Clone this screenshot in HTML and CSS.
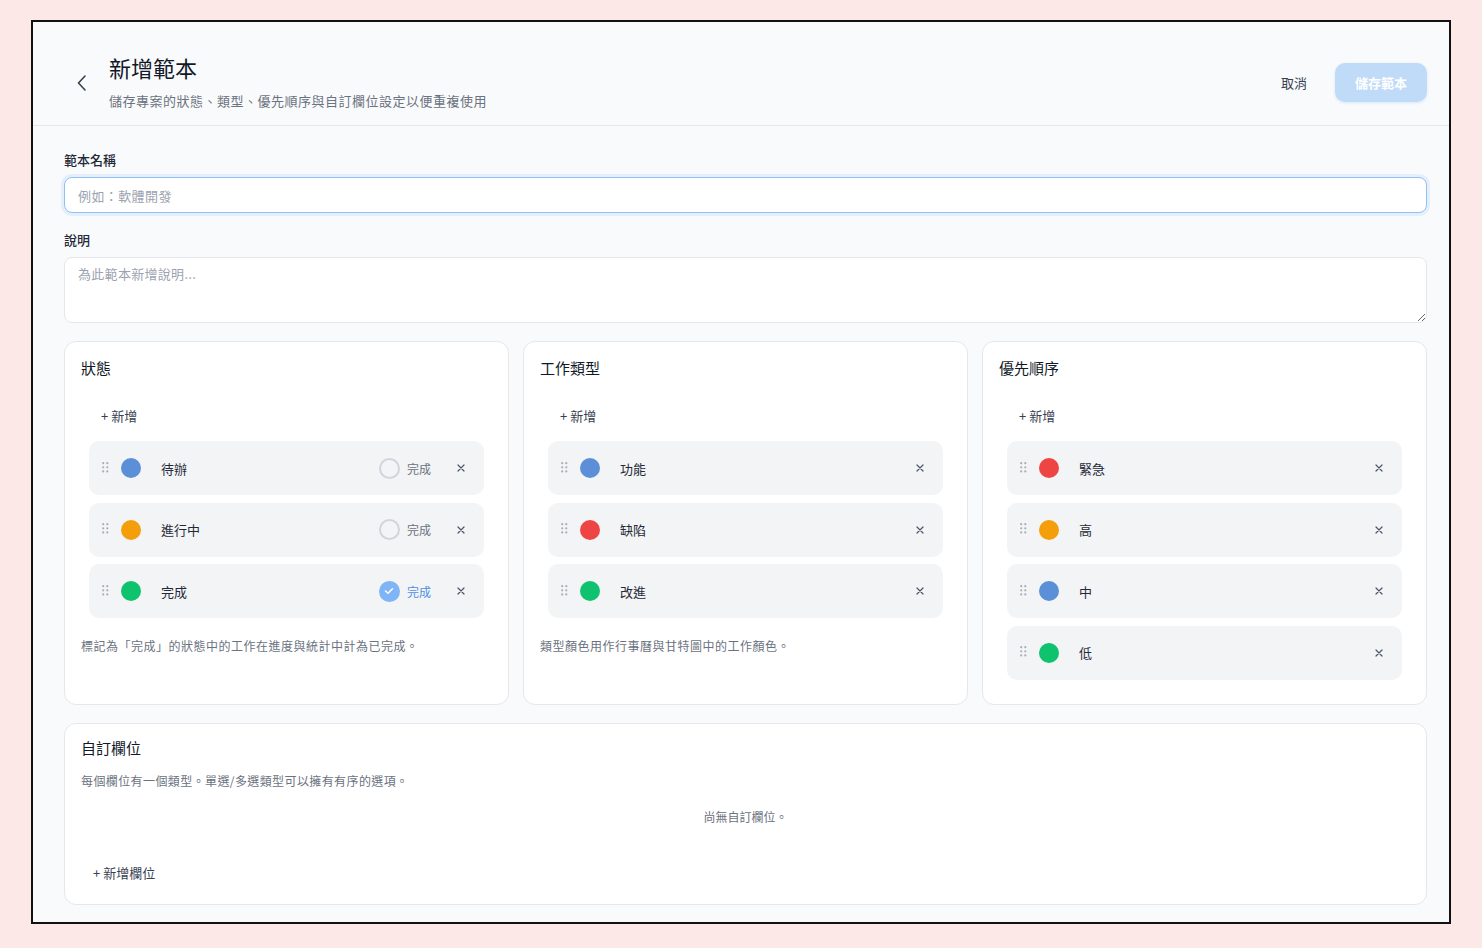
FILE: index.html
```html
<!DOCTYPE html>
<html lang="zh-Hant">
<head>
<meta charset="utf-8">
<title>新增範本</title>
<link rel="stylesheet" href="styles.css">
</head>
<body>
<div class="frame">
  <header class="header">
    <button class="back" aria-label="返回">
      <svg width="12" height="18" viewBox="0 0 12 18"><path d="M9 2 L2.5 9 L9 16" fill="none" stroke="#374151" stroke-width="1.6" stroke-linecap="round" stroke-linejoin="round"/></svg>
    </button>
    <div class="head-text">
      <h1 class="title">新增範本</h1>
      <p class="subtitle">儲存專案的狀態、類型、優先順序與自訂欄位設定以便重複使用</p>
    </div>
    <div class="head-actions">
      <button class="btn-cancel">取消</button>
      <button class="btn-save">儲存範本</button>
    </div>
  </header>

  <main class="main">
    <label class="label">範本名稱</label>
    <input class="input focused" type="text" placeholder="例如：軟體開發" autofocus>
    <label class="label label-gap">說明</label>
    <textarea class="textarea" placeholder="為此範本新增說明..."></textarea>

    <section class="cards">
      <div class="card">
        <h2 class="card-title">狀態</h2>
        <div class="list">
          <button class="add">+ 新增</button>
          <div class="row">
            <span class="handle"><svg width="7" height="11" viewBox="0 0 7 11"><g fill="#a8adb6"><circle cx="1.2" cy="1.2" r="1.1"/><circle cx="5.3" cy="1.2" r="1.1"/><circle cx="1.2" cy="5.3" r="1.1"/><circle cx="5.3" cy="5.3" r="1.1"/><circle cx="1.2" cy="9.4" r="1.1"/><circle cx="5.3" cy="9.4" r="1.1"/></g></svg></span>
            <span class="dot blue"></span>
            <span class="name">待辦</span>
            <span class="done"><span class="radio"></span><span class="done-text">完成</span></span>
            <span class="x"><svg width="8" height="8" viewBox="0 0 8 8"><path d="M1 1 L7 7 M7 1 L1 7" stroke="#4b5563" stroke-width="1.2" stroke-linecap="round"/></svg></span>
          </div>
          <div class="row">
            <span class="handle"><svg width="7" height="11" viewBox="0 0 7 11"><g fill="#a8adb6"><circle cx="1.2" cy="1.2" r="1.1"/><circle cx="5.3" cy="1.2" r="1.1"/><circle cx="1.2" cy="5.3" r="1.1"/><circle cx="5.3" cy="5.3" r="1.1"/><circle cx="1.2" cy="9.4" r="1.1"/><circle cx="5.3" cy="9.4" r="1.1"/></g></svg></span>
            <span class="dot orange"></span>
            <span class="name">進行中</span>
            <span class="done"><span class="radio"></span><span class="done-text">完成</span></span>
            <span class="x"><svg width="8" height="8" viewBox="0 0 8 8"><path d="M1 1 L7 7 M7 1 L1 7" stroke="#4b5563" stroke-width="1.2" stroke-linecap="round"/></svg></span>
          </div>
          <div class="row">
            <span class="handle"><svg width="7" height="11" viewBox="0 0 7 11"><g fill="#a8adb6"><circle cx="1.2" cy="1.2" r="1.1"/><circle cx="5.3" cy="1.2" r="1.1"/><circle cx="1.2" cy="5.3" r="1.1"/><circle cx="5.3" cy="5.3" r="1.1"/><circle cx="1.2" cy="9.4" r="1.1"/><circle cx="5.3" cy="9.4" r="1.1"/></g></svg></span>
            <span class="dot green"></span>
            <span class="name">完成</span>
            <span class="done on"><span class="radio checked"><svg width="10" height="8" viewBox="0 0 10 8"><path d="M1.5 4 L4 6.3 L8.5 1.7" fill="none" stroke="#fff" stroke-width="1.5" stroke-linecap="round" stroke-linejoin="round"/></svg></span><span class="done-text">完成</span></span>
            <span class="x"><svg width="8" height="8" viewBox="0 0 8 8"><path d="M1 1 L7 7 M7 1 L1 7" stroke="#4b5563" stroke-width="1.2" stroke-linecap="round"/></svg></span>
          </div>
        </div>
        <p class="help">標記為「完成」的狀態中的工作在進度與統計中計為已完成。</p>
      </div>

      <div class="card">
        <h2 class="card-title">工作類型</h2>
        <div class="list">
          <button class="add">+ 新增</button>
          <div class="row">
            <span class="handle"><svg width="7" height="11" viewBox="0 0 7 11"><g fill="#a8adb6"><circle cx="1.2" cy="1.2" r="1.1"/><circle cx="5.3" cy="1.2" r="1.1"/><circle cx="1.2" cy="5.3" r="1.1"/><circle cx="5.3" cy="5.3" r="1.1"/><circle cx="1.2" cy="9.4" r="1.1"/><circle cx="5.3" cy="9.4" r="1.1"/></g></svg></span>
            <span class="dot blue"></span>
            <span class="name">功能</span>
            <span class="x"><svg width="8" height="8" viewBox="0 0 8 8"><path d="M1 1 L7 7 M7 1 L1 7" stroke="#4b5563" stroke-width="1.2" stroke-linecap="round"/></svg></span>
          </div>
          <div class="row">
            <span class="handle"><svg width="7" height="11" viewBox="0 0 7 11"><g fill="#a8adb6"><circle cx="1.2" cy="1.2" r="1.1"/><circle cx="5.3" cy="1.2" r="1.1"/><circle cx="1.2" cy="5.3" r="1.1"/><circle cx="5.3" cy="5.3" r="1.1"/><circle cx="1.2" cy="9.4" r="1.1"/><circle cx="5.3" cy="9.4" r="1.1"/></g></svg></span>
            <span class="dot red"></span>
            <span class="name">缺陷</span>
            <span class="x"><svg width="8" height="8" viewBox="0 0 8 8"><path d="M1 1 L7 7 M7 1 L1 7" stroke="#4b5563" stroke-width="1.2" stroke-linecap="round"/></svg></span>
          </div>
          <div class="row">
            <span class="handle"><svg width="7" height="11" viewBox="0 0 7 11"><g fill="#a8adb6"><circle cx="1.2" cy="1.2" r="1.1"/><circle cx="5.3" cy="1.2" r="1.1"/><circle cx="1.2" cy="5.3" r="1.1"/><circle cx="5.3" cy="5.3" r="1.1"/><circle cx="1.2" cy="9.4" r="1.1"/><circle cx="5.3" cy="9.4" r="1.1"/></g></svg></span>
            <span class="dot green"></span>
            <span class="name">改進</span>
            <span class="x"><svg width="8" height="8" viewBox="0 0 8 8"><path d="M1 1 L7 7 M7 1 L1 7" stroke="#4b5563" stroke-width="1.2" stroke-linecap="round"/></svg></span>
          </div>
        </div>
        <p class="help">類型顏色用作行事曆與甘特圖中的工作顏色。</p>
      </div>

      <div class="card">
        <h2 class="card-title">優先順序</h2>
        <div class="list">
          <button class="add">+ 新增</button>
          <div class="row">
            <span class="handle"><svg width="7" height="11" viewBox="0 0 7 11"><g fill="#a8adb6"><circle cx="1.2" cy="1.2" r="1.1"/><circle cx="5.3" cy="1.2" r="1.1"/><circle cx="1.2" cy="5.3" r="1.1"/><circle cx="5.3" cy="5.3" r="1.1"/><circle cx="1.2" cy="9.4" r="1.1"/><circle cx="5.3" cy="9.4" r="1.1"/></g></svg></span>
            <span class="dot red"></span>
            <span class="name">緊急</span>
            <span class="x"><svg width="8" height="8" viewBox="0 0 8 8"><path d="M1 1 L7 7 M7 1 L1 7" stroke="#4b5563" stroke-width="1.2" stroke-linecap="round"/></svg></span>
          </div>
          <div class="row">
            <span class="handle"><svg width="7" height="11" viewBox="0 0 7 11"><g fill="#a8adb6"><circle cx="1.2" cy="1.2" r="1.1"/><circle cx="5.3" cy="1.2" r="1.1"/><circle cx="1.2" cy="5.3" r="1.1"/><circle cx="5.3" cy="5.3" r="1.1"/><circle cx="1.2" cy="9.4" r="1.1"/><circle cx="5.3" cy="9.4" r="1.1"/></g></svg></span>
            <span class="dot orange"></span>
            <span class="name">高</span>
            <span class="x"><svg width="8" height="8" viewBox="0 0 8 8"><path d="M1 1 L7 7 M7 1 L1 7" stroke="#4b5563" stroke-width="1.2" stroke-linecap="round"/></svg></span>
          </div>
          <div class="row">
            <span class="handle"><svg width="7" height="11" viewBox="0 0 7 11"><g fill="#a8adb6"><circle cx="1.2" cy="1.2" r="1.1"/><circle cx="5.3" cy="1.2" r="1.1"/><circle cx="1.2" cy="5.3" r="1.1"/><circle cx="5.3" cy="5.3" r="1.1"/><circle cx="1.2" cy="9.4" r="1.1"/><circle cx="5.3" cy="9.4" r="1.1"/></g></svg></span>
            <span class="dot blue"></span>
            <span class="name">中</span>
            <span class="x"><svg width="8" height="8" viewBox="0 0 8 8"><path d="M1 1 L7 7 M7 1 L1 7" stroke="#4b5563" stroke-width="1.2" stroke-linecap="round"/></svg></span>
          </div>
          <div class="row">
            <span class="handle"><svg width="7" height="11" viewBox="0 0 7 11"><g fill="#a8adb6"><circle cx="1.2" cy="1.2" r="1.1"/><circle cx="5.3" cy="1.2" r="1.1"/><circle cx="1.2" cy="5.3" r="1.1"/><circle cx="5.3" cy="5.3" r="1.1"/><circle cx="1.2" cy="9.4" r="1.1"/><circle cx="5.3" cy="9.4" r="1.1"/></g></svg></span>
            <span class="dot green"></span>
            <span class="name">低</span>
            <span class="x"><svg width="8" height="8" viewBox="0 0 8 8"><path d="M1 1 L7 7 M7 1 L1 7" stroke="#4b5563" stroke-width="1.2" stroke-linecap="round"/></svg></span>
          </div>
        </div>
      </div>
    </section>

    <section class="card custom">
      <h2 class="card-title">自訂欄位</h2>
      <p class="custom-desc">每個欄位有一個類型。單選/多選類型可以擁有有序的選項。</p>
      <p class="empty">尚無自訂欄位。</p>
      <button class="add add-field">+ 新增欄位</button>
    </section>
  </main>
</div>
</body>
</html>
```

FILE: styles.css
```css
* { box-sizing: border-box; }

body {
  margin: 0;
  background: #fde8e8;
  font-family: "Noto Sans CJK TC", "Noto Sans", sans-serif;
  color: #1f2937;
}

button {
  font-family: inherit;
  border: none;
  background: none;
  cursor: pointer;
  padding: 0;
}

.frame {
  margin: 20px 0 0 31px;
  width: 1420px;
  height: 904px;
  border: 2px solid #111;
  background: #f9fafb;
  overflow: hidden;
}

.header {
  display: flex;
  align-items: center;
  padding: 33px 22px 15px 43px;
  border-bottom: 1px solid #e5e7eb;
}

.back {
  width: 12px;
  height: 18px;
  display: flex;
  margin-right: 21px;
}

.head-text { flex: 1; }

.title {
  margin: -2px 0 0;
  font-size: 22px;
  line-height: 28px;
  font-weight: 400;
  color: #111827;
}

.subtitle {
  margin: 11px 0 0;
  font-size: 13px;
  line-height: 18px;
  letter-spacing: 0.5px;
  color: #6b7280;
}

.head-actions {
  display: flex;
  align-items: center;
  gap: 16px;
}

.btn-cancel {
  font-size: 13px;
  color: #374151;
  padding: 8px 12px;
}

.btn-save {
  width: 92px;
  height: 39px;
  border-radius: 10px;
  background: #c0dbf8;
  color: #fff;
  font-size: 13px;
  font-weight: 700;
  box-shadow: 0 1px 3px rgba(147, 197, 253, 0.35);
}

.main {
  padding: 25px 22px 0 31px;
  display: flex;
  flex-direction: column;
}

.label {
  font-size: 13px;
  line-height: 18px;
  font-weight: 500;
  color: #1f2937;
  margin-bottom: 8px;
}

.label-gap { margin-top: 18px; }

.input {
  height: 36px;
  border: 1px solid #e5e7eb;
  border-radius: 8px;
  background: #fff;
  padding: 0 13px;
  font-family: inherit;
  font-size: 13px;
  letter-spacing: 0.4px;
  color: #1f2937;
  outline: none;
}

.input.focused {
  border-color: #8fc0f8;
  box-shadow: 0 0 0 3px rgba(191, 219, 254, 0.35);
}

.input::placeholder,
.textarea::placeholder { color: #9ca3af; }

.textarea {
  height: 66px;
  border: 1px solid #e5e7eb;
  border-radius: 8px;
  background: #fff;
  padding: 7px 13px;
  font-family: inherit;
  font-size: 13px;
  line-height: 18px;
  letter-spacing: 0.3px;
  color: #1f2937;
  outline: none;
  resize: vertical;
}

.cards {
  margin-top: 18px;
  display: grid;
  grid-template-columns: repeat(3, 1fr);
  gap: 14px;
}

.card {
  background: #fff;
  border: 1px solid #e5e7eb;
  border-radius: 12px;
  padding: 16px;
}

.card-title {
  margin: 0;
  font-size: 15px;
  line-height: 20px;
  font-weight: 400;
  color: #111827;
}

.list {
  margin: 24px 8px 8px;
  display: flex;
  flex-direction: column;
}

.add {
  align-self: flex-start;
  font-size: 13px;
  line-height: 16px;
  color: #374151;
  padding: 6px 12px;
  margin-bottom: 11px;
}

.row {
  display: flex;
  align-items: center;
  height: 54px;
  background: #f3f4f6;
  border-radius: 10px;
  padding: 0 19px 0 13px;
  margin-bottom: 7.5px;
}

.row:last-child { margin-bottom: 0; }

.handle {
  display: flex;
  width: 7px;
  height: 11px;
  margin-top: -2px;
}

.dot {
  width: 20px;
  height: 20px;
  border-radius: 50%;
  margin-left: 12px;
  flex-shrink: 0;
}

.blue { background: #5b8fd8; }
.orange { background: #f59e0b; }
.green { background: #0fc26e; }
.red { background: #ef4444; }

.name {
  margin-left: 20px;
  flex: 1;
  font-size: 13px;
  color: #1f2937;
}

.done {
  display: flex;
  align-items: center;
  gap: 7px;
  margin-right: 26px;
}

.radio {
  width: 21px;
  height: 21px;
  border-radius: 50%;
  border: 2px solid #d1d5db;
  display: flex;
  align-items: center;
  justify-content: center;
}

.radio.checked {
  border: none;
  background: #7fb4f6;
}

.done-text {
  font-size: 12px;
  color: #6b7280;
}

.done.on .done-text { color: #4f8fe6; }

.x {
  display: flex;
  width: 8px;
  height: 8px;
}

.help {
  margin: 19px 0 0;
  font-size: 12px;
  line-height: 18px;
  letter-spacing: 0.5px;
  color: #6b7280;
}

.custom {
  margin-top: 18px;
  display: flex;
  flex-direction: column;
}

.custom .card-title { margin-top: -2px; margin-bottom: 2px; }

.custom-desc {
  margin: 12px 0 0;
  font-size: 12px;
  line-height: 18px;
  letter-spacing: 0.4px;
  color: #6b7280;
}

.empty {
  margin: 18px 0 0;
  text-align: center;
  font-size: 12px;
  line-height: 18px;
  color: #6b7280;
}

.add-field {
  margin: 32px 0 0;
  line-height: 18px;
}
```
